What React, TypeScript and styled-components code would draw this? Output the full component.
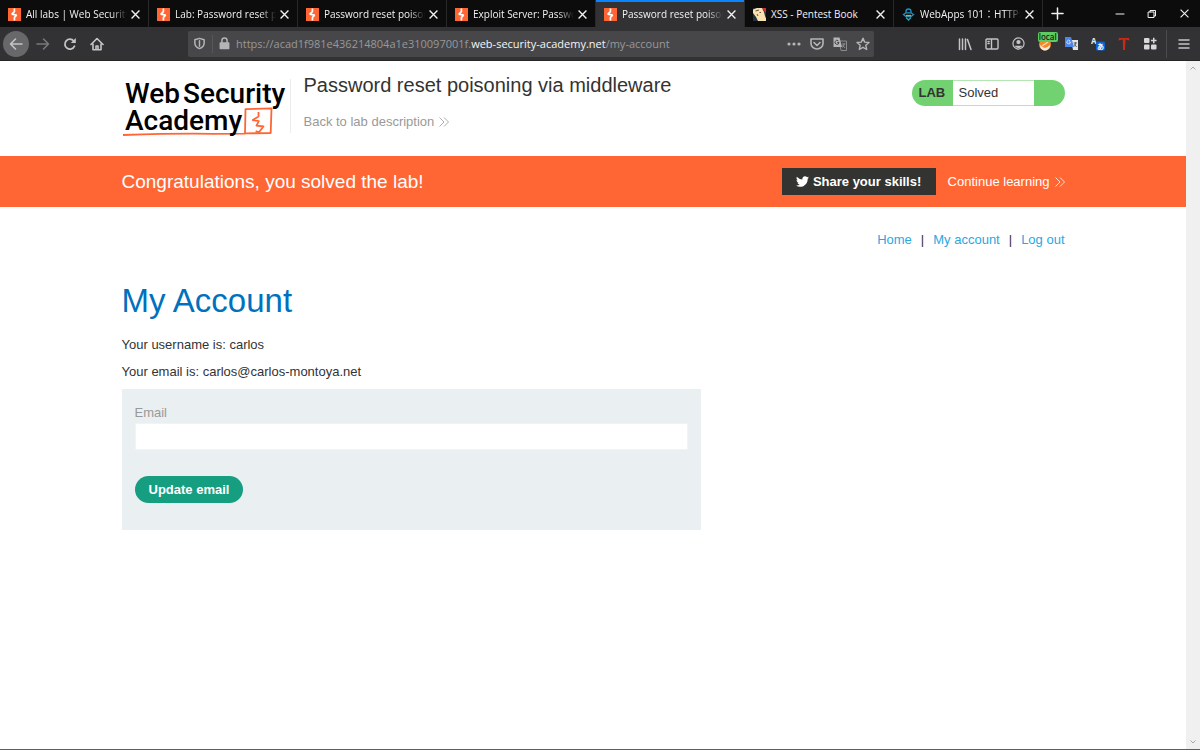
import React from 'react';
import styled, { createGlobalStyle } from 'styled-components';
import { FaTwitter } from 'react-icons/fa';

const GlobalStyle = createGlobalStyle`
  * { box-sizing: border-box; }
  body { margin: 0; background: #fff; }
  button { font: inherit; color: inherit; border: 0; padding: 0; background: none; cursor: pointer; }
  svg { display: block; flex: none; }
`;

const uiFont = `'Open Sans', 'Noto Sans CJK JP', sans-serif`;
const pageFont = `'Liberation Sans', Arial, sans-serif`;

const Window = styled.div`
  display: flex;
  flex-direction: column;
  min-height: 100vh;
  border-bottom: 1px solid #5f5d60;
`;

/* ---------- browser chrome ---------- */

const TabStrip = styled.div`
  display: flex;
  height: 27px;
  background: #0c0c0d;
  color: #f2f2f3;
  font: 10px/26px ${uiFont};
`;

const Tab = styled.div<{ $active?: boolean }>`
  display: flex;
  align-items: center;
  flex: 0 1 149px;
  min-width: 0;
  height: 27px;
  padding: 1px 8px 0 8px;
  border-right: 1px solid #29292b;
  background: ${p => (p.$active ? '#323234' : 'transparent')};
  box-shadow: ${p => (p.$active ? 'inset 0 2px 0 #0a84ff' : 'none')};
`;

const TabTitle = styled.button<{ $fade?: boolean }>`
  display: flex;
  align-items: center;
  gap: 5px;
  flex: 1;
  min-width: 0;
  height: 26px;
  white-space: nowrap;
  overflow: hidden;
  text-align: left;
  ${p => p.$fade && 'mask-image: linear-gradient(to left, transparent, #000 16px);'}
`;

const TabClose = styled.button`
  display: flex;
  align-items: center;
  justify-content: center;
  width: 10px;
  height: 16px;
  margin-left: 3px;
`;

const NewTab = styled.button`
  display: flex;
  align-items: center;
  justify-content: center;
  width: 28px;
`;

const WindowButtons = styled.div`
  display: flex;
  margin-left: auto;
`;

const WindowButton = styled.button`
  display: flex;
  align-items: center;
  justify-content: center;
  width: 32px;
  height: 27px;
`;

const NavBar = styled.nav`
  display: flex;
  align-items: center;
  height: 34px;
  padding-left: 3px;
  background: #323234;
  color: #c4c4c6;
  border-bottom: 1px solid #252526;
`;

const NavGroup = styled.div`
  display: flex;
  gap: 1px;
`;

const ToolGroup = styled.div`
  display: flex;
  justify-content: space-between;
  width: 212px;
`;

const ToolButton = styled.button<{ $round?: boolean; $dim?: boolean }>`
  position: relative;
  display: flex;
  align-items: center;
  justify-content: center;
  width: 26px;
  height: 26px;
  border-radius: 50%;
  background: ${p => (p.$round ? '#68686a' : 'none')};
  ${p => p.$dim && 'color: #78787a;'}
`;

const Badge = styled.span`
  position: absolute;
  top: 1px;
  left: 6px;
  padding: 0 1px;
  border-radius: 2px;
  background: #5fc962;
  color: #14260f;
  font: 600 8px/10px ${uiFont};
`;

const Separator = styled.span`
  width: 1px;
  height: 28px;
  margin: 0 4px 0 2px;
  background: #4b4b4d;
`;

const MenuSlot = styled.div`
  padding-right: 3px;
`;

const UrlBar = styled.div`
  display: flex;
  align-items: center;
  flex: 1;
  min-width: 0;
  height: 26px;
  margin: 0 78px;
  border-radius: 2px;
  background: #474749;
  color: #b5b5b7;
`;

const UrlIcon = styled.button`
  display: flex;
  align-items: center;
  justify-content: center;
  width: 23px;
  height: 24px;
`;

const UrlDivider = styled.span`
  width: 1px;
  height: 18px;
  margin-left: 1px;
  background: #58585a;
`;

const UrlText = styled.div`
  flex: 1;
  min-width: 0;
  overflow: hidden;
  white-space: nowrap;
  color: #98989a;
  font: 11px/24px ${uiFont};
  strong { color: #f5f5f6; font-weight: 400; }
`;

const Viewport = styled.div`
  display: flex;
  flex: 1;
`;

const Page = styled.div`
  flex: 1;
  min-width: 0;
  color: #333332;
  font: 13px/15px ${pageFont};
`;

const Scrollbar = styled.div`
  display: flex;
  flex-direction: column;
  align-items: center;
  justify-content: space-between;
  width: 14px;
  padding: 5px 0;
  background: #f0f0f0;
  color: #a9a9a9;
`;

/* ---------- page ---------- */

const Container = styled.div`
  display: flex;
  max-width: 943px;
  margin: 0 auto;
`;

const LabHeader = styled(Container)`
  height: 95px;
  padding-top: 13px;
`;

const LogoLink = styled.a`
  height: 54px;
  margin-top: 5px;
  padding-right: 3px;
  border-right: 1px solid #ececec;
`;

const LabInfo = styled.div`
  padding-left: 13px;
`;

const LabTitle = styled.h2`
  margin: 0 0 18px;
  font: 400 20px/22px ${pageFont};
`;

const ArrowLink = styled.a<{ $light?: boolean }>`
  display: inline-flex;
  align-items: center;
  gap: 5px;
  color: ${p => (p.$light ? '#fff' : '#999')};
  line-height: 16px;
  text-decoration: none;
`;

const LabStatus = styled.div`
  display: flex;
  width: 153px;
  height: 26px;
  margin: 6px 0 0 auto;
  overflow: hidden;
  border-radius: 13px;
  background: #72d272;
  line-height: 26px;
`;

const StatusTag = styled.strong`
  width: 41px;
  padding-left: 7px;
`;

const StatusText = styled.span`
  width: 81px;
  padding-left: 6px;
  border: solid #b4e6b4;
  border-width: 1px 0;
  background: #fff;
  line-height: 24px;
`;

const Banner = styled.section`
  background: #ff6633;
  color: #fff;
`;

const BannerRow = styled(Container)`
  align-items: center;
  height: 51px;
`;

const BannerTitle = styled.h4`
  margin: 0 auto 0 0;
  font: 400 19px/22px ${pageFont};
`;

const ShareButton = styled.button`
  display: flex;
  align-items: center;
  justify-content: center;
  gap: 4px;
  width: 154px;
  height: 27px;
  margin-right: 12px;
  background: #333332;
  color: #fff;
  font-weight: 700;
`;

const AccountNav = styled(Container)`
  justify-content: flex-end;
  gap: 9px;
  padding: 25px 0 34px;
  a { color: #29a8df; text-decoration: none; }
`;

const Account = styled.main`
  max-width: 943px;
  margin: 0 auto;
`;

const Heading = styled.h1`
  margin: 0 0 16px;
  color: #0071bc;
  font: 400 33px/40px ${pageFont};
`;

const Detail = styled.p`
  margin: 0 0 12px;
`;

const EmailForm = styled.form`
  display: flex;
  flex-direction: column;
  align-items: flex-start;
  max-width: 579px;
  margin-top: -2px;
  padding: 16px 13px 27px;
  background: #eaeff2;
`;

const Label = styled.label`
  margin-bottom: 3px;
  color: #999;
`;

const TextBox = styled.input`
  width: 100%;
  height: 27px;
  padding: 0 6px;
  border: 1px solid #f1f4f6;
  background: #fff;
  font: 13px/15px ${pageFont};
`;

const SubmitButton = styled.button`
  height: 27px;
  margin-top: 26px;
  padding: 0 14px;
  border-radius: 14px;
  background: #159e80;
  color: #fff;
  font-weight: 700;
`;

/* ---------- drawings ---------- */

const BurpIcon = () => (
  <svg width="13" height="13" viewBox="0 0 13 13">
    <rect width="13" height="13" fill="#ff6633" />
    <path d="M6.400.5v3.200L3.800 6.200l4.800.9-2.200 2.400v3" fill="none" stroke="#fff" strokeWidth="1.700" strokeLinejoin="bevel" />
  </svg>
);

const BookIcon = () => (
  <svg width="13" height="13" viewBox="0 0 13 13">
    <path d="M0 0h13v13H0z" fill="#1d3140" />
    <path d="M9 0h4v5z" fill="#d22c35" />
    <path d="M0 1.500 4 0h5l2 4 1 4 1 2.500V13H5L3 9 0 5z" fill="#f8e3ae" />
    <path d="M2.500 3 6 2M6.500 4.500h1.500M4 6l1 2" stroke="#6b5138" />
  </svg>
);

const WebAppsIcon = () => (
  <svg width="13" height="13" viewBox="0 0 13 13" fill="none" strokeWidth="1.300">
    <path d="M4 5V3.500a2.500 2.500 0 0 1 5 0V5" stroke="#1d8fc4" />
    <path d="M1.500 6.500 4 4.800h5l2.500 1.700L9 8.500H4z" stroke="#238fc0" />
    <path d="M4 7.500h5" stroke="#d6a238" />
    <path d="M4 9.500 6.500 12 9 9.500" stroke="#28a6b8" />
  </svg>
);

const Cross = ({ size = 9, width = 1.2 }: { size?: number; width?: number }) => (
  <svg width={size} height={size} viewBox="0 0 8 8" stroke="currentColor" strokeWidth={width}>
    <path d="M.5.5l7 7M7.500.5l-7 7" />
  </svg>
);

const Stroke = ({ d, size = 14, width = 1.6, children }: { d?: string; size?: number; width?: number; children?: React.ReactNode }) => (
  <svg width={size} height={size} viewBox="0 0 14 14" fill="none" stroke="currentColor" strokeWidth={width} strokeLinecap="round" strokeLinejoin="round">
    {d && <path d={d} />}
    {children}
  </svg>
);

const Chevrons = () => (
  <svg width="10" height="10" viewBox="0 0 10 10" fill="none" stroke="currentColor" strokeWidth=".8">
    <path d="M.5.5 5 5 .5 9.500M5 .5 9.500 5 5 9.500" />
  </svg>
);

const AcademyLogo = () => (
  <svg width="165" height="60" viewBox="0 0 165 60" role="img" aria-label="Web Security Academy">
    <g fill="none" stroke="#ff6633" strokeWidth="1.800" strokeLinejoin="round">
      <path d="M1 56c30-1 60-1.800 90-1.200l32-.2.500-24.500 26-.8-.8 24.700-25.200.4" />
      <path d="M136.500 33v4.500L130.800 41l6 1.200-2.300 4.500 7 .8-4.800 6-3-1.500" />
    </g>
    <g fill="#000" fontFamily="Roboto, sans-serif" fontSize="28" fontWeight="500">
      <text x="3" y="24">Web</text>
      <text x="61" y="24">Security</text>
      <text x="3" y="51">Academy</text>
    </g>
  </svg>
);

const TranslateIcon = () => (
  <svg width="14" height="14" viewBox="0 0 14 14">
    <path d="M6 4h7.500v9.500H8z" fill="none" stroke="#8b8b8d" />
    <path d="M.5.5h6l2.500 9.500H.5z" fill="#b5b5b7" />
    <path d="M5.500 4A2 2 0 1 0 6 5.500H4.200" fill="none" stroke="#474749" />
    <path d="M9 7h3.500M11 6v1c0 2-1 3-2 3.500M9.500 8l2.500 3" fill="none" stroke="#9b9b9d" strokeWidth=".8" />
  </svg>
);

const GoogleTranslateIcon = () => (
  <svg width="13" height="13" viewBox="0 0 13 13">
    <path d="M6 3h7v10H8z" fill="#e2e2e2" />
    <path d="M0 0h6l3 10H0z" fill="#4c86ec" />
    <path d="M5 3.800A1.800 1.800 0 1 0 5.500 5H3.800" fill="none" stroke="#dbe7ff" strokeWidth=".9" />
    <path d="M8.500 6H12M10.500 5v1c0 2-.7 3-1.500 3.500M9.500 7l2 3" fill="none" stroke="#59616d" />
  </svg>
);

const KanaIcon = () => (
  <svg width="14" height="14" viewBox="0 0 14 14">
    <text x="0" y="7" fontSize="8" fontWeight="700" fontFamily="Noto Sans, sans-serif" fill="#e6e6e6">A</text>
    <rect x="5" y="4.500" width="9" height="9" rx="1.500" fill="#0b62d8" />
    <text x="6" y="12" fontSize="7" fontWeight="700" fontFamily="Noto Sans CJK JP, sans-serif" fill="#fff">あ</text>
  </svg>
);

const FoxIcon = () => (
  <svg width="14" height="14" viewBox="0 0 14 14">
    <circle cx="7" cy="7.500" r="6" fill="#f08a2c" />
    <path d="M2 8c0 4 3 5.500 5 5.500S12 12 12 8L9.500 10 7 11 4.500 10z" fill="#f4e9dc" />
    <path d="m4 9 6-4" stroke="#fbd6a6" strokeWidth="1.500" />
  </svg>
);

/* ---------- app ---------- */

const tabs = [
  { title: 'All labs | Web Security Academy', icon: <BurpIcon />, fade: true },
  { title: 'Lab: Password reset poisoning', icon: <BurpIcon />, fade: true },
  { title: 'Password reset poisoning via', icon: <BurpIcon />, fade: true },
  { title: 'Exploit Server: Password reset', icon: <BurpIcon />, fade: true },
  { title: 'Password reset poisoning via', icon: <BurpIcon />, fade: true, active: true },
  { title: 'XSS - Pentest Book', icon: <BookIcon /> },
  { title: 'WebApps 101：HTTPポート', icon: <WebAppsIcon />, fade: true },
];

export default function App() {
  return (
    <Window>
      <GlobalStyle />
      <TabStrip>
        {tabs.map((t, i) => (
          <Tab key={i} $active={t.active}>
            <TabTitle $fade={t.fade}>{t.icon}{t.title}</TabTitle>
            <TabClose aria-label="Close tab"><Cross /></TabClose>
          </Tab>
        ))}
        <NewTab aria-label="New tab"><Stroke d="M7 1v12M1 7h12" size={13} /></NewTab>
        <WindowButtons>
          <WindowButton aria-label="Minimize"><Stroke d="M3 7h8" width={1} /></WindowButton>
          <WindowButton aria-label="Restore"><Stroke d="M3.500 5h5.500v5.500H3.500zM5 5V3.500h5.500V9H9" width={1} /></WindowButton>
          <WindowButton aria-label="Close window"><Cross width={1} /></WindowButton>
        </WindowButtons>
      </TabStrip>

      <NavBar aria-label="Browser">
        <NavGroup>
          <ToolButton $round aria-label="Back"><Stroke d="M13 7H1.500M6.500 2l-5 5 5 5" /></ToolButton>
          <ToolButton $dim aria-label="Forward"><Stroke d="M1 7h11.500M7.500 2l5 5-5 5" /></ToolButton>
          <ToolButton aria-label="Reload">
            <Stroke width={1.800}>
              <path d="M11.500 9.200A5 5 0 1 1 10.800 4" />
              <path d="M12.800 1v5H7.800z" fill="currentColor" stroke="none" />
            </Stroke>
          </ToolButton>
          <ToolButton aria-label="Home"><Stroke d="M1 7.500 7 1.500l6 6M3 7v5.700h8V7M6 12.500V9h2v3.500" /></ToolButton>
        </NavGroup>
        <UrlBar>
          <UrlIcon aria-label="Tracking protection">
            <Stroke size={13}>
              <path d="M7 1.500 12 3v3.500c0 3-2 5-5 6-3-1-5-3-5-6V3z" />
              <path d="M7 4v6" />
            </Stroke>
          </UrlIcon>
          <UrlDivider />
          <UrlIcon aria-label="Connection security">
            <Stroke size={13}>
              <rect x="2.500" y="6.500" width="9" height="6" fill="currentColor" />
              <path d="M4.200 6V4a2.800 2.800 0 0 1 5.600 0v2" />
            </Stroke>
          </UrlIcon>
          <UrlText role="textbox" aria-label="Address">
            https://acad1f981e436214804a1e310097001f.<strong>web-security-academy.net</strong>/my-account
          </UrlText>
          <UrlIcon aria-label="Page actions">
            <svg width="14" height="4" viewBox="0 0 14 4" fill="currentColor">
              <circle cx="2" cy="2" r="1.600" /><circle cx="7" cy="2" r="1.600" /><circle cx="12" cy="2" r="1.600" />
            </svg>
          </UrlIcon>
          <UrlIcon aria-label="Pocket"><Stroke d="M1 2h12v4.500a6 5.500 0 0 1-12 0zM4 5.500l3 3 3-3" /></UrlIcon>
          <UrlIcon aria-label="Translate page"><TranslateIcon /></UrlIcon>
          <UrlIcon aria-label="Bookmark"><Stroke d="m7 1.200 1.700 3.900 4.300.4-3.200 2.800.9 4.200L7 10.300l-3.700 2.200.9-4.200L1 5.500l4.300-.4z" width={1.400} /></UrlIcon>
        </UrlBar>
        <ToolGroup>
          <ToolButton aria-label="Library"><Stroke d="M1.500 2v10.500M4.500 2v10.500M7.500 2v10.500M9.500 2.500l3.500 10" width={1.500} /></ToolButton>
          <ToolButton aria-label="Sidebar"><Stroke d="M2 2h10a1 1 0 0 1 1 1v8a1 1 0 0 1-1 1H2a1 1 0 0 1-1-1V3a1 1 0 0 1 1-1zM6.500 2v10M3 4.500h1.200M3 6.500h1.200" width={1.400} /></ToolButton>
          <ToolButton aria-label="Account">
            <Stroke size={13} width={1.300}>
              <circle cx="7" cy="7" r="6" />
              <circle cx="7" cy="5.500" r="2.300" fill="currentColor" stroke="none" />
              <path d="M3 9.500h8c-1 2-2.500 2.500-4 2.500s-3-.5-4-2.500z" fill="currentColor" stroke="none" />
            </Stroke>
          </ToolButton>
          <ToolButton><FoxIcon /><Badge>local</Badge></ToolButton>
          <ToolButton aria-label="Google Translate"><GoogleTranslateIcon /></ToolButton>
          <ToolButton aria-label="Translator"><KanaIcon /></ToolButton>
          <ToolButton aria-label="Text tools">
            <svg width="12" height="14" viewBox="0 0 12 14"><path d="M.5 3.500 1 1h10l.5 2.500-4-1L7 13H5l-.2-10.500z" fill="#c92a16" /></svg>
          </ToolButton>
          <ToolButton aria-label="Extensions">
            <svg width="13" height="13" viewBox="0 0 13 13" fill="#d8d8da">
              <rect y="1" width="5.500" height="5" rx="1" /><rect y="7.500" width="5.500" height="5" rx="1" />
              <rect x="7" y="7.500" width="5.500" height="5" rx="1" /><path d="M9 .8h1.500v2h2v1.500h-2v2H9v-2H7V2.800h2z" />
            </svg>
          </ToolButton>
        </ToolGroup>
        <Separator />
        <MenuSlot>
          <ToolButton aria-label="Menu"><Stroke d="M2 3h10M2 7h10M2 11h10" width={1.500} /></ToolButton>
        </MenuSlot>
      </NavBar>

      <Viewport>
        <Page>
          <LabHeader as="header">
            <LogoLink href="#"><AcademyLogo /></LogoLink>
            <LabInfo>
              <LabTitle>Password reset poisoning via middleware</LabTitle>
              <ArrowLink href="#">Back to lab description <Chevrons /></ArrowLink>
            </LabInfo>
            <LabStatus>
              <StatusTag>LAB</StatusTag>
              <StatusText>Solved</StatusText>
            </LabStatus>
          </LabHeader>

          <Banner>
            <BannerRow>
              <BannerTitle>Congratulations, you solved the lab!</BannerTitle>
              <ShareButton><FaTwitter size={13} />Share your skills!</ShareButton>
              <ArrowLink href="#" $light>Continue learning <Chevrons /></ArrowLink>
            </BannerRow>
          </Banner>

          <AccountNav as="nav">
            <a href="#">Home</a><span>|</span>
            <a href="#">My account</a><span>|</span>
            <a href="#">Log out</a>
          </AccountNav>

          <Account>
            <Heading>My Account</Heading>
            <Detail>Your username is: carlos</Detail>
            <Detail>Your email is: carlos@carlos-montoya.net</Detail>
            <EmailForm onSubmit={e => e.preventDefault()}>
              <Label htmlFor="email">Email</Label>
              <TextBox id="email" type="email" name="email" />
              <SubmitButton type="submit">Update email</SubmitButton>
            </EmailForm>
          </Account>
        </Page>
        <Scrollbar aria-hidden="true">
          <svg width="6" height="4" viewBox="0 0 6 4" fill="none" stroke="currentColor"><path d="M.5 3.500 3 1l2.500 2.500" /></svg>
          <svg width="6" height="4" viewBox="0 0 6 4" fill="none" stroke="currentColor"><path d="M.5.5 3 3 5.500.5" /></svg>
        </Scrollbar>
      </Viewport>
    </Window>
  );
}
